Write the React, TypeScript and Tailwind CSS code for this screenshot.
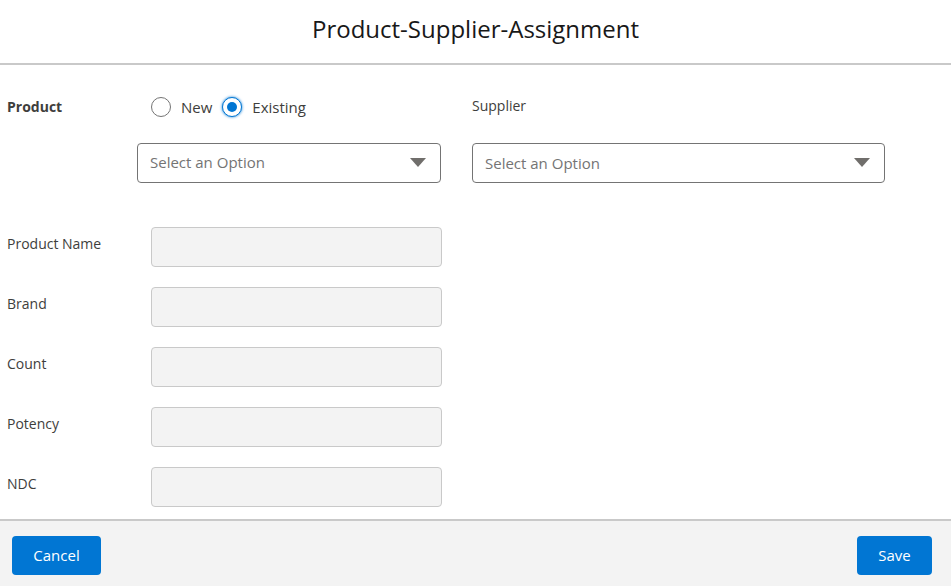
import React, { useState } from "react";

const fields = ["Product Name", "Brand", "Count", "Potency", "NDC"];

const SelectBox = ({ className }: { className?: string }) => (
  <div
    className={
      "flex h-10 items-center justify-between rounded border border-[#747474] bg-white pl-3 pr-3.5 text-[15px] text-[#747474] " +
      (className ?? "")
    }
  >
    <span>Select an Option</span>
    <svg width="16" height="10" viewBox="0 0 16 10">
      <path d="M0 0 L16 0 L8 9 Z" fill="#706e6b" />
    </svg>
  </div>
);

const Radio = ({ checked }: { checked: boolean }) =>
  checked ? (
    <span className="flex h-5 w-5 items-center justify-center rounded-full border border-[#0176d3] bg-white shadow-[0_0_3px_#0176d3]">
      <span className="h-2.5 w-2.5 rounded-full bg-[#0176d3]" />
    </span>
  ) : (
    <span className="h-5 w-5 rounded-full border border-[#747474] bg-white" />
  );

export default function App() {
  const [mode, setMode] = useState("existing");

  return (
    <div className="flex h-[586px] w-[951px] flex-col bg-white font-['Open_Sans',sans-serif] text-[#3e3e3c]">
      <div className="flex h-[65px] items-center justify-center border-b-2 border-[#c9c9c9] pb-[5px] text-[24px] text-[#181818]">
        Product-Supplier-Assignment
      </div>

      <div className="flex-1 pt-[31px]">
        <div className="flex">
          <div className="w-[462px]">
            <div className="flex items-center">
              <div className="w-[151px] pl-[7px] text-sm font-bold">Product</div>
              <label className="flex cursor-pointer items-center" onClick={() => setMode("new")}>
                <Radio checked={mode === "new"} />
                <span className="ml-2.5 text-[15px]">New</span>
              </label>
              <label className="ml-[10px] flex cursor-pointer items-center" onClick={() => setMode("existing")}>
                <Radio checked={mode === "existing"} />
                <span className="ml-2.5 text-[15px]">Existing</span>
              </label>
            </div>
            <SelectBox className="ml-[137px] mt-[24px] w-[304px]" />
          </div>
          <div className="w-[413px] pl-[10px]">
            <div className="text-sm leading-[22px] mt-[-1px]">Supplier</div>
            <SelectBox className="mt-[26px] w-[413px]" />
          </div>
        </div>

        <div className="mt-[44px] flex flex-col gap-5">
          {fields.map((f) => (
            <div key={f} className="flex items-center">
              <div className="w-[151px] pl-[7px] pb-[6px] text-sm">{f}</div>
              <div className="h-10 w-[291px] rounded border border-[#c9c9c9] bg-[#f3f3f3]" />
            </div>
          ))}
        </div>
      </div>

      <div className="flex h-[67px] items-center justify-between border-t-2 border-[#c9c9c9] bg-[#f3f3f3] px-3 pt-[3px]">
        <button className="h-[39px] w-[89px] rounded bg-[#0176d3] text-[15px] text-white">Cancel</button>
        <button className="mr-[7px] h-[39px] w-[75px] rounded bg-[#0176d3] text-[15px] text-white">Save</button>
      </div>
    </div>
  );
}
